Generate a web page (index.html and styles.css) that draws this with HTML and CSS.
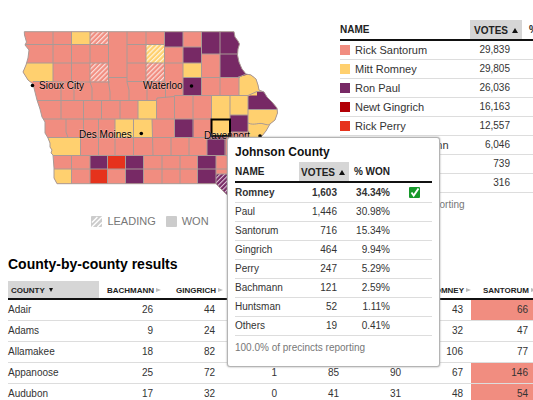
FILE: index.html
```html
<!DOCTYPE html>
<html lang="en">
<head>
<meta charset="utf-8">
<title>Iowa caucus results</title>
<link rel="stylesheet" href="styles.css">
</head>
<body>
<main class="page">
  <section class="top">
    <figure class="map">
      <svg class="map-art" viewBox="8 20 284 180" role="img" aria-label="Iowa counties">
        <defs>
          <pattern id="hs" width="3.4" height="4" patternUnits="userSpaceOnUse" patternTransform="rotate(45)"><rect width="4" height="4" fill="#f18d80"/><rect width="1.2" height="4" fill="#fbe0dc"/></pattern>
          <pattern id="hr" width="3.4" height="4" patternUnits="userSpaceOnUse" patternTransform="rotate(45)"><rect width="4" height="4" fill="#ffd06f"/><rect width="1.2" height="4" fill="#fff6e0"/></pattern>
          <pattern id="hp" width="3.2" height="4" patternUnits="userSpaceOnUse" patternTransform="rotate(45)"><rect width="4" height="4" fill="#772965"/><rect width="1" height="4" fill="#e6cfe0"/></pattern>
          <clipPath id="state"><path id="outline" d="M24.3 31.7H234L235 37L238 41L239.5 44L238 49L237.5 55L239 62L242 69L246 74L251 75L256 79L258 85L259 90L264 92L267 97L272 102L277 108L277.5 113L275 120L270 124L266 131L262 136L250 145L240 165L240 196L228 196L221 189L216 183.7H57L54 178L54 168L53 155L51 153L52 150L50 147L50 143L48 138L45 133L45 122L42 117L40 109L37 100L35 92L33 84L28 80L23 72L26 65L28 58L29 50L25 45L26.5 42L24.5 35Z"/></clipPath>
        </defs>
        <g clip-path="url(#state)">
          <rect class="s" x="15" y="25" width="270" height="175"/>
          <g class="p">
            <path d="M164.500 31.700H183V47h-18.500zM201.500 31.700H245V54H201.500zM183 47h18.500v16H183zM220 54h35V77H220zM183 77.500h18.500v18H183zM248 96.500L257 91H280V109.500H248zM230 115h18v17H230zM175 119h18.500v18.500H175zM207 137.500h18.500v18H207zM90 155.500h17.500V169H90zM125.500 155.500h18V184h-18zM197.500 155.500H216V184h-18.500z"/>
            <path fill="url(#hp)" d="M216 174H245V200H216z"/>
          </g>
          <g class="r">
            <path d="M71.5 31.7h18.5v12.8h-18.5zM20 63h33v18.5H20zM183 63h18.5v14.5H183zM239 77L248 74.500H260V91.500H257V95.500H239zM138 100.5h18.5V119H138zM211.5 95.500H248V115H230V136H211.5zM248 109.500H280V140H248zM115 119h18.5v18.5H115zM133.500 119H152v18.500h-18.500zM45 137.500h35.500v18H45zM50 169h22v16H50z"/>
          </g>
          <path class="e" d="M107.500 155.500h18V169h-18zM90 169h17.500v15H90z"/>
          <path fill="url(#hs)" d="M90 31.700h18.500v12.800H90zM90 63h18.500v18.500H90zM146 63h18.500v18.500H146z"/>
          <path fill="url(#hr)" d="M146 44.500h18.500V63H146z"/>
          <path class="line" d="M24 44.500H108.500M127 44.500H164.500M164.500 47H201.500M201.500 54H240M24 63H108.500M127 63H201.500M33 81.500H53L61 82H110M108.500 77.500H127M127 81.500H165.500M183 77.500H240M37 100.500H156.500M156.500 100.500L157 98L174.500 96.500V95.500H248L257 91.500H264M43 119H211.500M45 137.500H207M207 139H225M52 155.500H230M54 169H230M216 174H230M248 109.500H280M230 115H248M230 132H248M248 123C255 126 258 122 264 124S269 123 274 124
          M53 31V81.500M71.500 31V82M90 31V82M108.500 31V82M127 31V82M146 31V81.500L147 90V100M164.500 31V81.500L165.500 83V98M183 31V95.500M201.500 31V95.500M220 31V95.500M239 76V95.500
          M61 82V119M74 82V100.500M90 82L92 88V100.500M108.500 82L110 92V100.500M127 82L129 90V100.500M83.500 100.500V119M101.500 100.500V119M120 100.500V119M138 100.500V119M156.500 100.500V119M174.500 96.500V137.500M193 95.500V138M211.500 95.500V139M230 95.500V138M248 95.500V140M66 119V132L68 137.500M83.500 119V137.500M98.500 119V155.500M115 119V155.500M133.500 119V155.500M152 119L153 155.500M80.500 137.500V155.500M171 137.500V155.500M189 137.500V155.500M207 137.500V155.500M225 137.500V155.500M71.500 155.500V184M90 155.500V184M107.500 155.500V184M125.500 155.500V184M143.500 155.500V184M162 155.500V184M180 155.500V184M197.500 155.500V184M216 155.500V184M239 77L246 74"/>
        </g>
        <use href="#outline" class="line"/>
        <path class="focus" d="M211.500 119.500H230V136H211.500z"/>
        <g class="city">
          <circle cx="32.500" cy="85.500" r="1.800"/><text x="39" y="89">Sioux City</text>
          <circle cx="191.500" cy="86" r="1.800"/><text x="143" y="89">Waterloo</text>
          <circle cx="141.300" cy="133.500" r="1.800"/><text x="79" y="138">Des Moines</text>
          <circle cx="260" cy="136" r="1.800"/><text x="204" y="139">Davenport</text>
        </g>
      </svg>
      <figcaption class="legend">
        <span class="key"><svg class="key-box" viewBox="0 0 12 12"><rect width="12" height="12" rx="1" fill="#ccc"/><path d="M1 7L7 1M1 12L12 1M7 12L12 7" stroke="#fff" stroke-width="1.500"/></svg>LEADING</span>
        <span class="key"><svg class="key-box" viewBox="0 0 12 12"><rect width="12" height="12" rx="1" fill="#ccc"/></svg>WON</span>
      </figcaption>
    </figure>
    <div class="totals">
      <table class="tally state-tally">
        <colgroup><col class="c-name"><col class="c-votes"><col></colgroup>
        <thead><tr><th>NAME</th><th class="sorted">VOTES<i class="up"></i></th><th class="pct">% WON</th></tr></thead>
        <tbody>
          <tr><td><i class="chip s"></i>Rick Santorum</td><td>29,839</td><td></td></tr>
          <tr><td><i class="chip r"></i>Mitt Romney</td><td>29,805</td><td></td></tr>
          <tr><td><i class="chip p"></i>Ron Paul</td><td>26,036</td><td></td></tr>
          <tr><td><i class="chip g"></i>Newt Gingrich</td><td>16,163</td><td></td></tr>
          <tr><td><i class="chip e"></i>Rick Perry</td><td>12,557</td><td></td></tr>
          <tr><td><i class="chip"></i>Michele Bachmann</td><td>6,046</td><td></td></tr>
          <tr><td><i class="chip"></i>Jon Huntsman</td><td>739</td><td></td></tr>
          <tr><td><i class="chip"></i>Others</td><td>316</td><td></td></tr>
        </tbody>
      </table>
      <p class="note">99.9% of precincts reporting</p>
    </div>
  </section>

  <section>
    <h2>County-by-county results</h2>
    <table class="counties">
      <colgroup><col class="c-county"><col class="c-cand"><col class="c-cand"><col class="c-cand"><col class="c-cand"><col class="c-cand"><col class="c-cand"><col></colgroup>
      <thead><tr><th class="sorted">COUNTY<i class="down"></i></th><th>BACHMANN<i class="side"></i></th><th>GINGRICH<i class="side"></i></th><th>HUNTSMAN<i class="side"></i></th><th>PAUL<i class="side"></i></th><th>PERRY<i class="side"></i></th><th>ROMNEY<i class="side"></i></th><th>SANTORUM<i class="side"></i></th></tr></thead>
      <tbody>
        <tr><td>Adair</td><td>26</td><td>44</td><td></td><td></td><td></td><td>43</td><td class="s">66</td></tr>
        <tr><td>Adams</td><td>9</td><td>24</td><td></td><td></td><td></td><td>32</td><td>47</td></tr>
        <tr><td>Allamakee</td><td>18</td><td>82</td><td></td><td></td><td></td><td>106</td><td>77</td></tr>
        <tr><td>Appanoose</td><td>25</td><td>72</td><td>1</td><td>85</td><td>90</td><td>67</td><td class="s">146</td></tr>
        <tr><td>Audubon</td><td>17</td><td>32</td><td>0</td><td>41</td><td>31</td><td>48</td><td class="s">54</td></tr>
      </tbody>
    </table>
  </section>

  <aside class="popup">
    <h3>Johnson County</h3>
    <table class="tally county-tally">
      <colgroup><col class="c-name"><col class="c-votes"><col class="c-pct"><col></colgroup>
      <thead><tr><th>NAME</th><th class="sorted">VOTES<i class="up"></i></th><th class="pct">% WON</th><th></th></tr></thead>
      <tbody>
        <tr class="winner"><td>Romney</td><td>1,603</td><td>34.34%</td><td><svg class="check" viewBox="0 0 11 11" role="img" aria-label="Winner"><rect width="11" height="11" rx="1" fill="#17992b"/><path d="M2.500 5.500L4.700 8.500L9.500 1.500" fill="none" stroke="#fff" stroke-width="1.900"/></svg></td></tr>
        <tr><td>Paul</td><td>1,446</td><td>30.98%</td><td></td></tr>
        <tr><td>Santorum</td><td>716</td><td>15.34%</td><td></td></tr>
        <tr><td>Gingrich</td><td>464</td><td>9.94%</td><td></td></tr>
        <tr><td>Perry</td><td>247</td><td>5.29%</td><td></td></tr>
        <tr><td>Bachmann</td><td>121</td><td>2.59%</td><td></td></tr>
        <tr><td>Huntsman</td><td>52</td><td>1.11%</td><td></td></tr>
        <tr><td>Others</td><td>19</td><td>0.41%</td><td></td></tr>
      </tbody>
    </table>
    <p class="note">100.0% of precincts reporting</p>
  </aside>
</main>
</body>
</html>
```
FILE: styles.css
```css
* { box-sizing: border-box; }
html { scrollbar-width: none; }
body {
  margin: 0;
  overflow-x: hidden;
  background: #fff;
  color: #333;
  font: 10px/14px "Liberation Sans", Arial, sans-serif;
}
h2, h3, p, figure { margin: 0; }
.page { position: relative; min-width: 544px; padding: 20px 8px 0; }

.top { display: grid; grid-template-columns: 284px 1fr; column-gap: 48px; }
.map-art { display: block; width: 100%; }
.line { fill: none; stroke: #a99a96; stroke-width: 1; }
.focus { fill: none; stroke: #000; stroke-width: 2; }
.city { fill: #000; font-size: 10px; }
.city text { stroke: #fff; stroke-opacity: .3; stroke-width: 1; paint-order: stroke; }
.s { fill: #f18d80; background: #f18d80; }
.r { fill: #ffd06f; background: #ffd06f; }
.p { fill: #772965; background: #772965; }
.g { background: #b20006; }
.e { fill: #e6321c; background: #e6321c; }

.legend {
  display: flex;
  justify-content: center;
  gap: 10px;
  margin-top: 14px;
  color: #777;
  font-size: 11px;
}
.key { display: flex; align-items: center; gap: 5px; }
.key-box { width: 11px; height: 11px; }

table { width: 100%; table-layout: fixed; border-collapse: separate; border-spacing: 0; }
th, td { padding: 0; text-align: right; white-space: nowrap; }
th { border-bottom: 2px solid #111; color: #222; vertical-align: bottom; }
td { border-bottom: 1px solid #ddd; }
th:first-child, td:first-child { text-align: left; }
.sorted { background: #d6d6d6; }
th i { display: inline-block; }
.up {
  margin-left: 4px;
  border: 3px solid transparent;
  border-top: 0;
  border-bottom: 5px solid #111;
  vertical-align: 1px;
}
.down {
  margin-left: 4px;
  border: 2px solid transparent;
  border-bottom: 0;
  border-top: 4px solid #111;
  vertical-align: 1px;
}
.side {
  margin-left: 2px;
  border: 2px solid transparent;
  border-right: 0;
  border-left: 5px solid #bbb;
  vertical-align: 1px;
}

.tally th { height: 21px; padding-bottom: 2px; }
.tally td { height: 19px; }
.tally .sorted { padding-right: 4px; padding-bottom: 1px; }
.tally td:nth-child(2) { padding-right: 12px; }
.chip { display: inline-block; width: 10px; height: 10px; margin-right: 5px; vertical-align: -1px; }
.note { padding-top: 5px; color: #777; }

.state-tally td:first-child { font-size: 11px; }
.state-tally .c-name { width: 130px; }
.state-tally .c-votes { width: 52px; }
.state-tally .pct { padding-left: 7px; text-align: left; }

h2 { margin-top: 27px; color: #000; font-size: 14px; line-height: 18px; }
.counties { margin-top: 8px; }
.c-county { width: 91px; }
.c-cand { width: 62px; }
.counties th { height: 19px; font-size: 8px; line-height: 14px; }
.counties th:first-child { padding-left: 3px; }
.counties td { height: 21px; padding-right: 8px; }
.counties td:first-child { padding-right: 0; }

.popup {
  position: absolute;
  left: 227px;
  top: 137px;
  width: 213px;
  padding: 7px 7px 11px;
  border: 1px solid #b4b4b4;
  border-radius: 3px;
  background: #fff;
  box-shadow: 0 0 2px #999;
}
h3 { color: #111; font-size: 12px; line-height: 15px; }
.county-tally { margin-top: 2px; }
.county-tally .c-name { width: 64px; }
.county-tally .c-votes { width: 50px; }
.county-tally .c-pct { width: 41px; }
.county-tally td:last-child { padding-left: 19px; text-align: left; }
.county-tally .winner td { height: 20px; }
.winner { font-weight: bold; }
.check { display: block; width: 11px; height: 11px; }
```
